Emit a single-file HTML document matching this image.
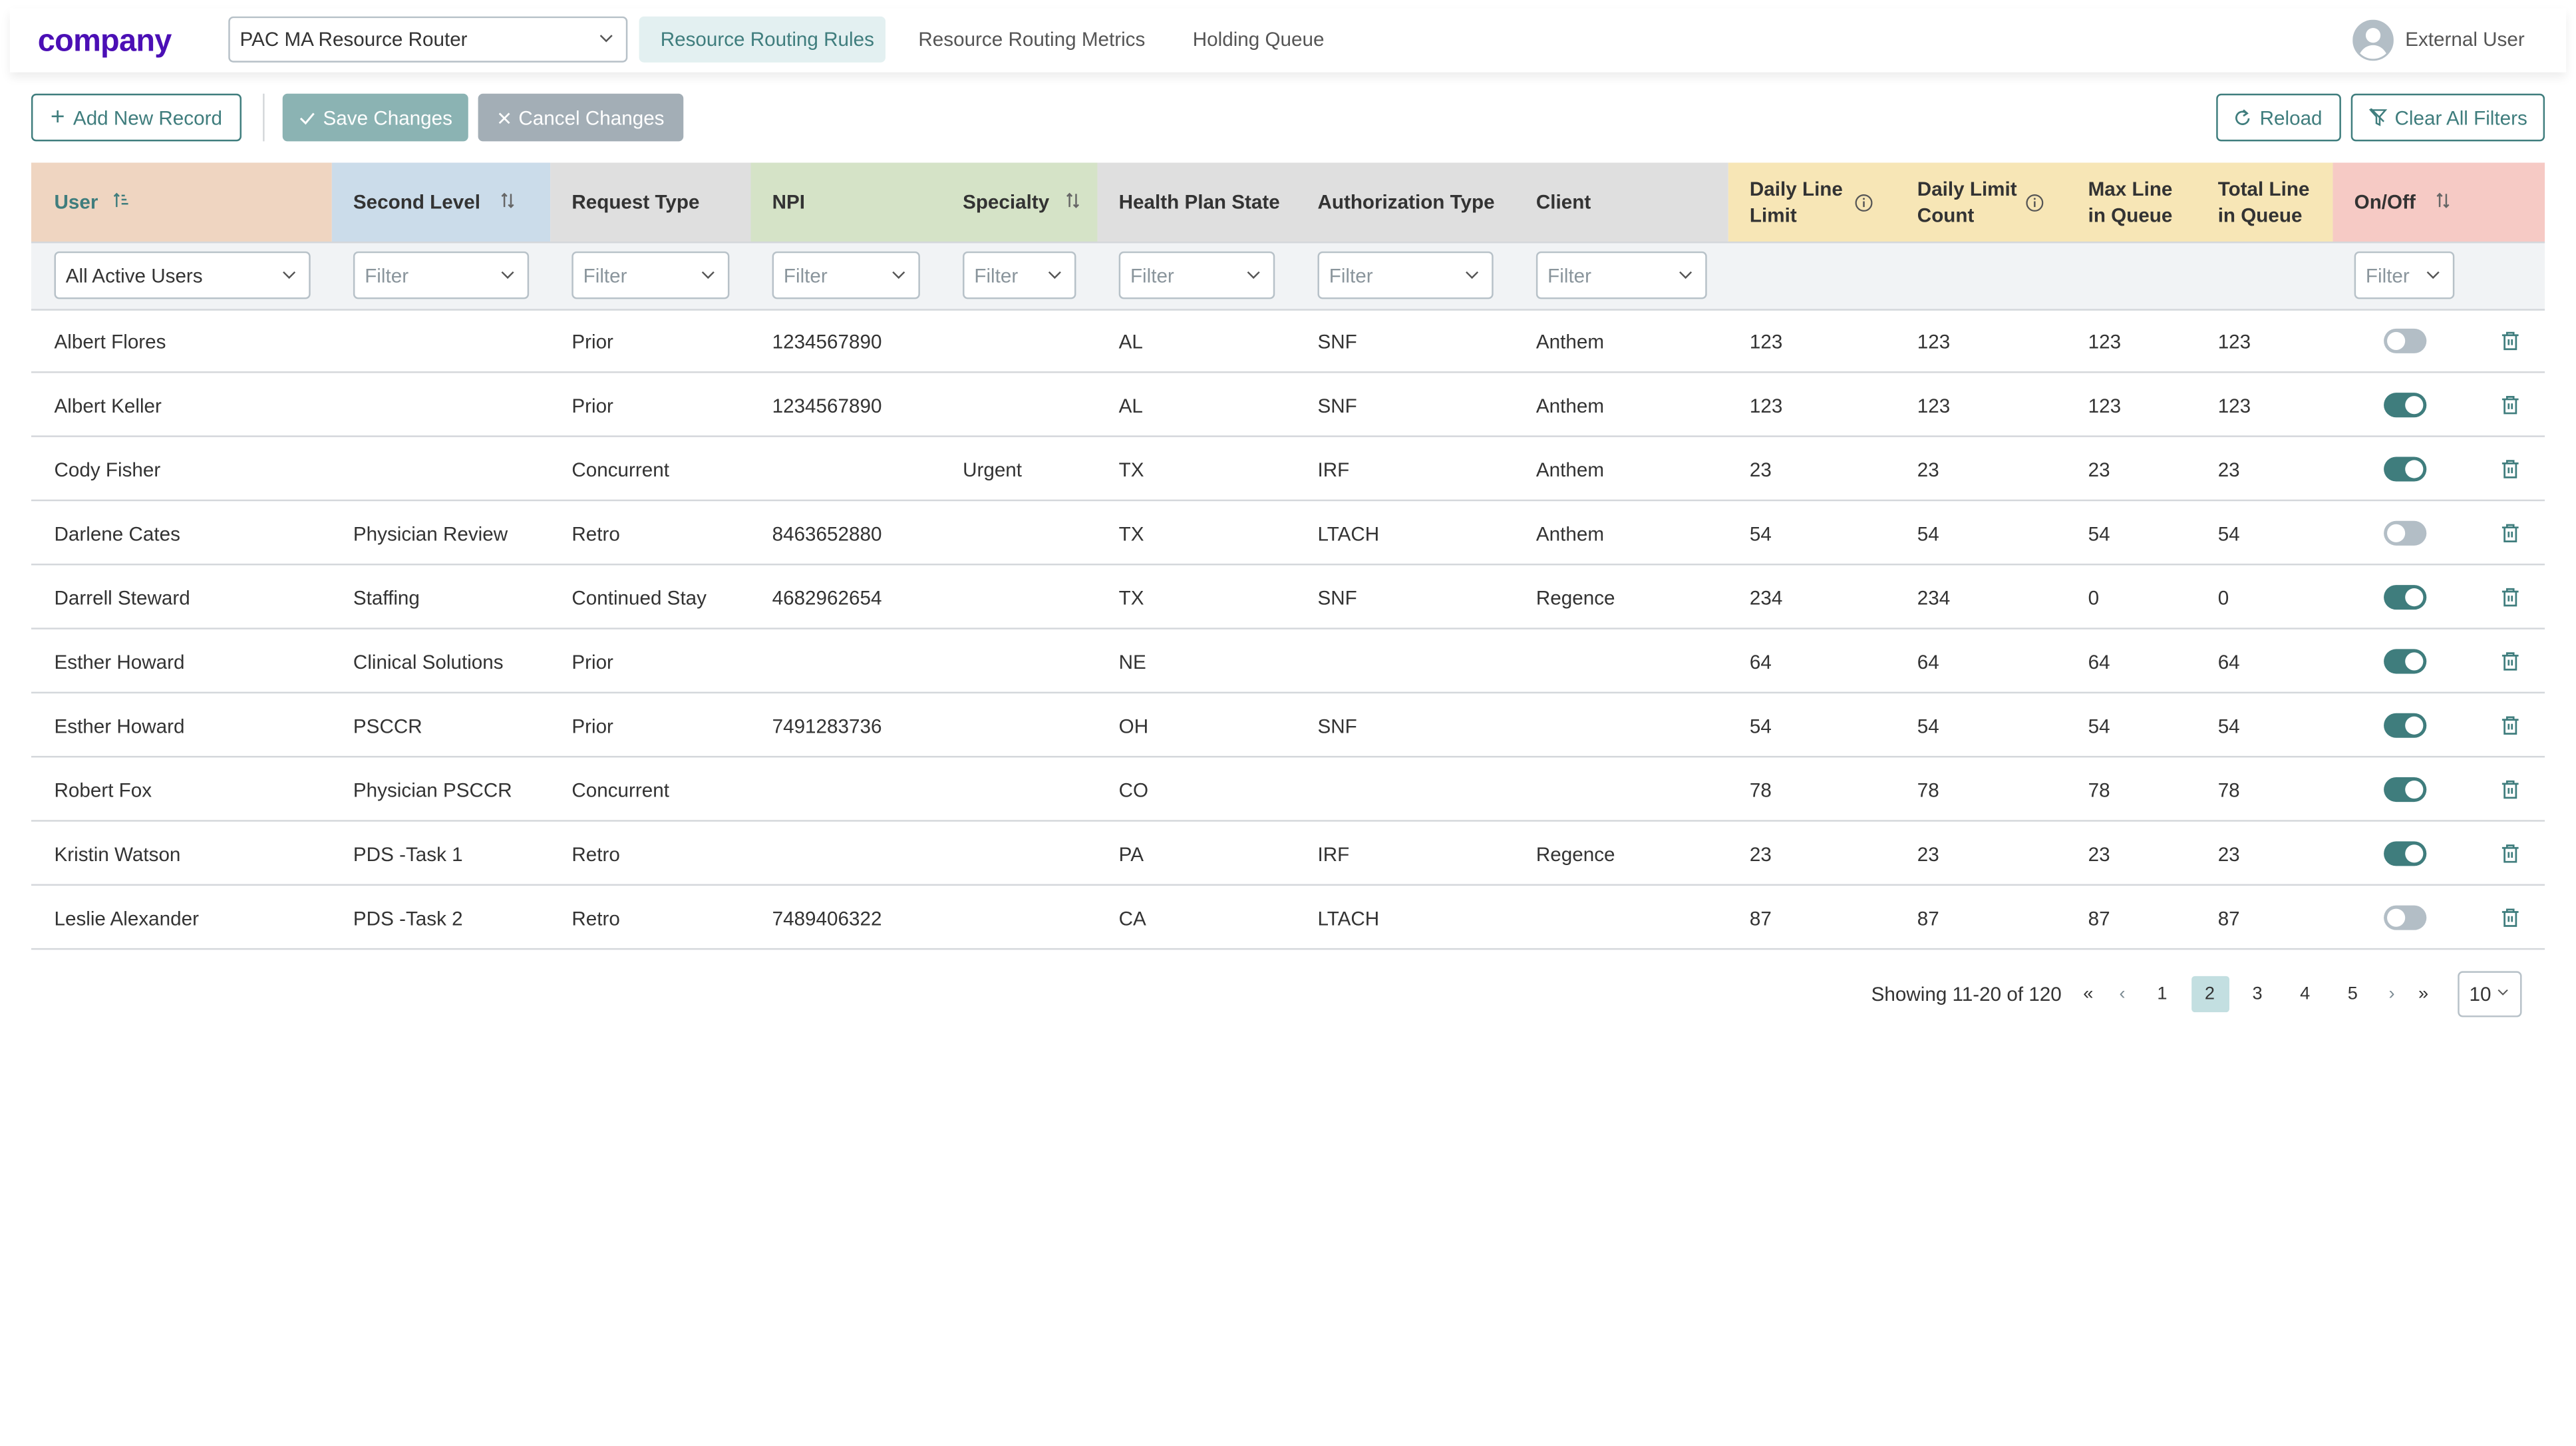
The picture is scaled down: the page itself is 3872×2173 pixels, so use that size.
<!DOCTYPE html>
<html><head><meta charset="utf-8">
<style>
html,body{margin:0;padding:0;background:#fff;width:3872px;height:2172px;overflow:hidden}
#root{position:absolute;left:0;top:0;width:1568px;height:880px;transform:scale(2.4694);transform-origin:0 0;font-family:"Liberation Sans",sans-serif;font-size:12px;color:#333}
.a{position:absolute}
.hdr{left:6px;top:5px;width:1556px;height:39px;background:#fff;box-shadow:0 3px 6px rgba(0,0,0,.08)}
.sel{position:absolute;background:#fff;border:1px solid #b7c1c8;border-radius:3px;box-sizing:border-box}
.sel span{position:absolute;left:6px;top:50%;transform:translateY(-50%);white-space:nowrap}
.sel svg{position:absolute;right:8px;top:50%;margin-top:-3px}
.btn{position:absolute;box-sizing:border-box;border-radius:3px;display:flex;align-items:center;justify-content:center;gap:5px;font-size:12px;white-space:nowrap}
.ob{border:1px solid #3f7d7d;color:#3f7d7d;background:#fff}
.th{position:absolute;top:99px;height:48px}
.hl{position:absolute;font-weight:bold;color:#333;line-height:16px;white-space:nowrap}
.row{position:absolute;left:19px;width:1530px;height:38px;border-bottom:1px solid #d4d7db}
.row span{position:absolute;line-height:38px;padding-top:1px;white-space:nowrap}
.tg{position:absolute;top:12px;left:1432px;width:26px;height:15px;border-radius:8px}
.tg i{position:absolute;top:2px;width:11px;height:11px;border-radius:50%;background:#fff}
.on{background:#3f7d7d}.on i{left:13px}
.off{background:#b3bec6}.off i{left:2px}
.tr{position:absolute;left:1503px;top:13px}
.pg{position:absolute;top:605px;transform:translateY(-50%);white-space:nowrap;font-size:11px}
</style></head><body><div id="root">

<div class="a hdr"></div>
<div class="a" style="left:23px;top:15px;font-size:19px;font-weight:bold;color:#4b0fb5;letter-spacing:-.3px">company</div>
<div class="sel" style="left:139px;top:10px;width:243px;height:28px"><span>PAC MA Resource Router</span><svg width="8" height="5" viewBox="0 0 8 5"><path d="M.5.5 4 4 7.5.5" fill="none" stroke="#555" stroke-width="1"/></svg></div>
<div class="a" style="left:389px;top:10px;width:150px;height:28px;background:#e3f0f1;border-radius:3px"></div>
<div class="a" style="left:402px;top:17px;color:#3f7d7d">Resource Routing Rules</div>
<div class="a" style="left:559px;top:17px;color:#555">Resource Routing Metrics</div>
<div class="a" style="left:726px;top:17px;color:#555">Holding Queue</div>
<svg class="a" style="left:1432px;top:12px" width="25" height="25" viewBox="0 0 25 25"><circle cx="12.5" cy="12.5" r="12.5" fill="#b3bec6"/><circle cx="12.5" cy="9.5" r="4.5" fill="#fff"/><path d="M4.5 20.5c2-3.5 5-5 8-5s6 1.5 8 5c-2.2 2.1-5 3.3-8 3.3s-5.800-1.2-8-3.3z" fill="#fff"/></svg>
<div class="a" style="left:1464px;top:17px;color:#555">External User</div>

<div class="btn ob" style="left:19px;top:57px;width:128px;height:29px"><span style="font-size:15px;line-height:12px">+</span>Add New Record</div>
<div class="a" style="left:160px;top:57px;width:1px;height:29px;background:#d4d7db"></div>
<div class="btn" style="left:172px;top:57px;width:113px;height:29px;background:#8bb3b3;color:#fff"><svg width="10" height="8" viewBox="0 0 10 8"><path d="M1 4l3 3 5-6" fill="none" stroke="#fff" stroke-width="1.2"/></svg>Save Changes</div>
<div class="btn" style="left:291px;top:57px;width:125px;height:29px;background:#a3aeb6;color:#fff"><svg width="8" height="8" viewBox="0 0 8 8"><path d="M1 1l6 6M7 1 1 7" stroke="#fff" stroke-width="1.1"/></svg>Cancel Changes</div>
<div class="btn ob" style="left:1349px;top:57px;width:76px;height:29px"><svg width="10" height="11" viewBox="0 0 10 11"><path d="M7.6 3A3.8 3.8 0 1 0 8.8 6" fill="none" stroke="#3f7d7d" stroke-width="1.1"/><path d="M5.5 1 7.8 3 5.5 4.5" fill="none" stroke="#3f7d7d" stroke-width="1.1"/></svg>Reload</div>
<div class="btn ob" style="left:1431px;top:57px;width:118px;height:29px"><svg width="11" height="11" viewBox="0 0 11 11"><path d="M1 1h9L6.5 5v5L4.5 9V5z" fill="none" stroke="#3f7d7d" stroke-width="1"/><path d="M1 0 9 8" stroke="#3f7d7d" stroke-width="1"/></svg>Clear All Filters</div>

<div class="th" style="left:19px;width:183px;background:#efd5c1"></div>
<div class="th" style="left:202px;width:133px;background:#cbdcea"></div>
<div class="th" style="left:335px;width:122px;background:#dfdfdf"></div>
<div class="th" style="left:457px;width:211px;background:#d5e3c7"></div>
<div class="th" style="left:668px;width:384px;background:#dfdfdf"></div>
<div class="th" style="left:1052px;width:368px;background:#f7e6b6"></div>
<div class="th" style="left:1420px;width:129px;background:#f6cac5"></div>
<div class="hl" style="left:33px;top:115px;color:#3f7d7d">User <svg width="10" height="10" viewBox="0 0 10 10" style="margin-left:6px"><path d="M2 9V1M0.5 2.5 2 1l1.5 1.5" fill="none" stroke="#3f7d7d"/><path d="M5 2h2M5 4.5h3M5 7h4" stroke="#3f7d7d"/></svg></div>
<div class="hl" style="left:215px;top:115px">Second Level <svg width="10" height="10" viewBox="0 0 10 10" style="margin-left:8px"><path d="M3 9V1M1.5 2.5 3 1l1.5 1.5M7 1v8M5.5 7.5 7 9l1.5-1.5" fill="none" stroke="#666"/></svg></div>
<div class="hl" style="left:348px;top:115px">Request Type</div>
<div class="hl" style="left:470px;top:115px">NPI</div>
<div class="hl" style="left:586px;top:115px">Specialty <svg width="10" height="10" viewBox="0 0 10 10" style="margin-left:6px"><path d="M3 9V1M1.5 2.5 3 1l1.5 1.5M7 1v8M5.5 7.5 7 9l1.5-1.5" fill="none" stroke="#666"/></svg></div>
<div class="hl" style="left:681px;top:115px">Health Plan State</div>
<div class="hl" style="left:802px;top:115px">Authorization Type</div>
<div class="hl" style="left:935px;top:115px">Client</div>
<div class="hl" style="left:1065px;top:107px">Daily Line<br>Limit</div>
<svg class="a" style="left:1129px;top:118px" width="11" height="11" viewBox="0 0 11 11"><circle cx="5.5" cy="5.5" r="4.8" fill="none" stroke="#555" stroke-width=".9"/><path d="M5.5 4.5v3.5" stroke="#555"/><circle cx="5.5" cy="3" r=".6" fill="#555"/></svg>
<div class="hl" style="left:1167px;top:107px">Daily Limit<br>Count</div>
<svg class="a" style="left:1233px;top:118px" width="11" height="11" viewBox="0 0 11 11"><circle cx="5.5" cy="5.5" r="4.8" fill="none" stroke="#555" stroke-width=".9"/><path d="M5.5 4.5v3.5" stroke="#555"/><circle cx="5.5" cy="3" r=".6" fill="#555"/></svg>
<div class="hl" style="left:1271px;top:107px">Max Line<br>in Queue</div>
<div class="hl" style="left:1350px;top:107px">Total Line<br>in Queue</div>
<div class="hl" style="left:1433px;top:115px">On/Off <svg width="10" height="10" viewBox="0 0 10 10" style="margin-left:8px"><path d="M3 9V1M1.5 2.5 3 1l1.5 1.5M7 1v8M5.5 7.5 7 9l1.5-1.5" fill="none" stroke="#666"/></svg></div>

<div class="a" style="left:19px;top:147px;width:1530px;height:40px;background:#f1f3f5;border-top:1px solid #d4d7db;border-bottom:1px solid #d4d7db"></div>
<div class="sel" style="left:33px;top:153px;width:156px;height:29px"><span>All Active Users</span><svg width="8" height="5" viewBox="0 0 8 5"><path d="M.5.5 4 4 7.5.5" fill="none" stroke="#555"/></svg></div>
<div class="sel" style="left:215px;top:153px;width:107px;height:29px;color:#8a959c"><span>Filter</span><svg width="8" height="5" viewBox="0 0 8 5"><path d="M.5.5 4 4 7.5.5" fill="none" stroke="#555"/></svg></div>
<div class="sel" style="left:348px;top:153px;width:96px;height:29px;color:#8a959c"><span>Filter</span><svg width="8" height="5" viewBox="0 0 8 5"><path d="M.5.5 4 4 7.5.5" fill="none" stroke="#555"/></svg></div>
<div class="sel" style="left:470px;top:153px;width:90px;height:29px;color:#8a959c"><span>Filter</span><svg width="8" height="5" viewBox="0 0 8 5"><path d="M.5.5 4 4 7.5.5" fill="none" stroke="#555"/></svg></div>
<div class="sel" style="left:586px;top:153px;width:69px;height:29px;color:#8a959c"><span>Filter</span><svg width="8" height="5" viewBox="0 0 8 5"><path d="M.5.5 4 4 7.5.5" fill="none" stroke="#555"/></svg></div>
<div class="sel" style="left:681px;top:153px;width:95px;height:29px;color:#8a959c"><span>Filter</span><svg width="8" height="5" viewBox="0 0 8 5"><path d="M.5.5 4 4 7.5.5" fill="none" stroke="#555"/></svg></div>
<div class="sel" style="left:802px;top:153px;width:107px;height:29px;color:#8a959c"><span>Filter</span><svg width="8" height="5" viewBox="0 0 8 5"><path d="M.5.5 4 4 7.5.5" fill="none" stroke="#555"/></svg></div>
<div class="sel" style="left:935px;top:153px;width:104px;height:29px;color:#8a959c"><span>Filter</span><svg width="8" height="5" viewBox="0 0 8 5"><path d="M.5.5 4 4 7.5.5" fill="none" stroke="#555"/></svg></div>
<div class="sel" style="left:1433px;top:153px;width:61px;height:29px;color:#8a959c"><span>Filter</span><svg width="8" height="5" viewBox="0 0 8 5"><path d="M.5.5 4 4 7.5.5" fill="none" stroke="#555"/></svg></div>

<div class="row" style="top:188px"><span style="left:14px">Albert Flores</span><span style="left:329px">Prior</span><span style="left:451px">1234567890</span><span style="left:662px">AL</span><span style="left:783px">SNF</span><span style="left:916px">Anthem</span><span style="left:1046px">123</span><span style="left:1148px">123</span><span style="left:1252px">123</span><span style="left:1331px">123</span><div class="tg off"><i></i></div><svg class="tr" width="12" height="13" viewBox="0 0 12 13"><path d="M1 3h10M4 3V1.5h4V3M2.5 3v8.5h7V3M5 5.5v3.5M7 5.5v3.5" fill="none" stroke="#3f7d7d" stroke-width="1.1"/></svg></div>
<div class="row" style="top:227px"><span style="left:14px">Albert Keller</span><span style="left:329px">Prior</span><span style="left:451px">1234567890</span><span style="left:662px">AL</span><span style="left:783px">SNF</span><span style="left:916px">Anthem</span><span style="left:1046px">123</span><span style="left:1148px">123</span><span style="left:1252px">123</span><span style="left:1331px">123</span><div class="tg on"><i></i></div><svg class="tr" width="12" height="13" viewBox="0 0 12 13"><path d="M1 3h10M4 3V1.5h4V3M2.5 3v8.5h7V3M5 5.5v3.5M7 5.5v3.5" fill="none" stroke="#3f7d7d" stroke-width="1.1"/></svg></div>
<div class="row" style="top:266px"><span style="left:14px">Cody Fisher</span><span style="left:329px">Concurrent</span><span style="left:567px">Urgent</span><span style="left:662px">TX</span><span style="left:783px">IRF</span><span style="left:916px">Anthem</span><span style="left:1046px">23</span><span style="left:1148px">23</span><span style="left:1252px">23</span><span style="left:1331px">23</span><div class="tg on"><i></i></div><svg class="tr" width="12" height="13" viewBox="0 0 12 13"><path d="M1 3h10M4 3V1.5h4V3M2.5 3v8.5h7V3M5 5.5v3.5M7 5.5v3.5" fill="none" stroke="#3f7d7d" stroke-width="1.1"/></svg></div>
<div class="row" style="top:305px"><span style="left:14px">Darlene Cates</span><span style="left:196px">Physician Review</span><span style="left:329px">Retro</span><span style="left:451px">8463652880</span><span style="left:662px">TX</span><span style="left:783px">LTACH</span><span style="left:916px">Anthem</span><span style="left:1046px">54</span><span style="left:1148px">54</span><span style="left:1252px">54</span><span style="left:1331px">54</span><div class="tg off"><i></i></div><svg class="tr" width="12" height="13" viewBox="0 0 12 13"><path d="M1 3h10M4 3V1.5h4V3M2.5 3v8.5h7V3M5 5.5v3.5M7 5.5v3.5" fill="none" stroke="#3f7d7d" stroke-width="1.1"/></svg></div>
<div class="row" style="top:344px"><span style="left:14px">Darrell Steward</span><span style="left:196px">Staffing</span><span style="left:329px">Continued Stay</span><span style="left:451px">4682962654</span><span style="left:662px">TX</span><span style="left:783px">SNF</span><span style="left:916px">Regence</span><span style="left:1046px">234</span><span style="left:1148px">234</span><span style="left:1252px">0</span><span style="left:1331px">0</span><div class="tg on"><i></i></div><svg class="tr" width="12" height="13" viewBox="0 0 12 13"><path d="M1 3h10M4 3V1.5h4V3M2.5 3v8.5h7V3M5 5.5v3.5M7 5.5v3.5" fill="none" stroke="#3f7d7d" stroke-width="1.1"/></svg></div>
<div class="row" style="top:383px"><span style="left:14px">Esther Howard</span><span style="left:196px">Clinical Solutions</span><span style="left:329px">Prior</span><span style="left:662px">NE</span><span style="left:1046px">64</span><span style="left:1148px">64</span><span style="left:1252px">64</span><span style="left:1331px">64</span><div class="tg on"><i></i></div><svg class="tr" width="12" height="13" viewBox="0 0 12 13"><path d="M1 3h10M4 3V1.5h4V3M2.5 3v8.5h7V3M5 5.5v3.5M7 5.5v3.5" fill="none" stroke="#3f7d7d" stroke-width="1.1"/></svg></div>
<div class="row" style="top:422px"><span style="left:14px">Esther Howard</span><span style="left:196px">PSCCR</span><span style="left:329px">Prior</span><span style="left:451px">7491283736</span><span style="left:662px">OH</span><span style="left:783px">SNF</span><span style="left:1046px">54</span><span style="left:1148px">54</span><span style="left:1252px">54</span><span style="left:1331px">54</span><div class="tg on"><i></i></div><svg class="tr" width="12" height="13" viewBox="0 0 12 13"><path d="M1 3h10M4 3V1.5h4V3M2.5 3v8.5h7V3M5 5.5v3.5M7 5.5v3.5" fill="none" stroke="#3f7d7d" stroke-width="1.1"/></svg></div>
<div class="row" style="top:461px"><span style="left:14px">Robert Fox</span><span style="left:196px">Physician PSCCR</span><span style="left:329px">Concurrent</span><span style="left:662px">CO</span><span style="left:1046px">78</span><span style="left:1148px">78</span><span style="left:1252px">78</span><span style="left:1331px">78</span><div class="tg on"><i></i></div><svg class="tr" width="12" height="13" viewBox="0 0 12 13"><path d="M1 3h10M4 3V1.5h4V3M2.5 3v8.5h7V3M5 5.5v3.5M7 5.5v3.5" fill="none" stroke="#3f7d7d" stroke-width="1.1"/></svg></div>
<div class="row" style="top:500px"><span style="left:14px">Kristin Watson</span><span style="left:196px">PDS -Task 1</span><span style="left:329px">Retro</span><span style="left:662px">PA</span><span style="left:783px">IRF</span><span style="left:916px">Regence</span><span style="left:1046px">23</span><span style="left:1148px">23</span><span style="left:1252px">23</span><span style="left:1331px">23</span><div class="tg on"><i></i></div><svg class="tr" width="12" height="13" viewBox="0 0 12 13"><path d="M1 3h10M4 3V1.5h4V3M2.5 3v8.5h7V3M5 5.5v3.5M7 5.5v3.5" fill="none" stroke="#3f7d7d" stroke-width="1.1"/></svg></div>
<div class="row" style="top:539px"><span style="left:14px">Leslie Alexander</span><span style="left:196px">PDS -Task 2</span><span style="left:329px">Retro</span><span style="left:451px">7489406322</span><span style="left:662px">CA</span><span style="left:783px">LTACH</span><span style="left:1046px">87</span><span style="left:1148px">87</span><span style="left:1252px">87</span><span style="left:1331px">87</span><div class="tg off"><i></i></div><svg class="tr" width="12" height="13" viewBox="0 0 12 13"><path d="M1 3h10M4 3V1.5h4V3M2.5 3v8.5h7V3M5 5.5v3.5M7 5.5v3.5" fill="none" stroke="#3f7d7d" stroke-width="1.1"/></svg></div>

<div class="pg" style="left:1139px;font-size:12px">Showing 11-20 of 120</div>
<div class="pg" style="left:1268px">«</div>
<div class="pg" style="left:1290px;color:#7b8a92">‹</div>
<div class="pg" style="left:1313px">1</div>
<div class="a" style="left:1334px;top:594px;width:23px;height:22px;background:#c3dfe1;border-radius:2px"></div>
<div class="pg" style="left:1342px">2</div>
<div class="pg" style="left:1371px">3</div>
<div class="pg" style="left:1400px">4</div>
<div class="pg" style="left:1429px">5</div>
<div class="pg" style="left:1454px;color:#7b8a92">›</div>
<div class="pg" style="left:1472px">»</div>
<div class="sel" style="left:1496px;top:591px;width:39px;height:28px"><span style="font-size:12px">10</span><svg width="7" height="4" viewBox="0 0 8 5" style="right:7px"><path d="M.5.5 4 4 7.5.5" fill="none" stroke="#555"/></svg></div>

</div></body></html>
